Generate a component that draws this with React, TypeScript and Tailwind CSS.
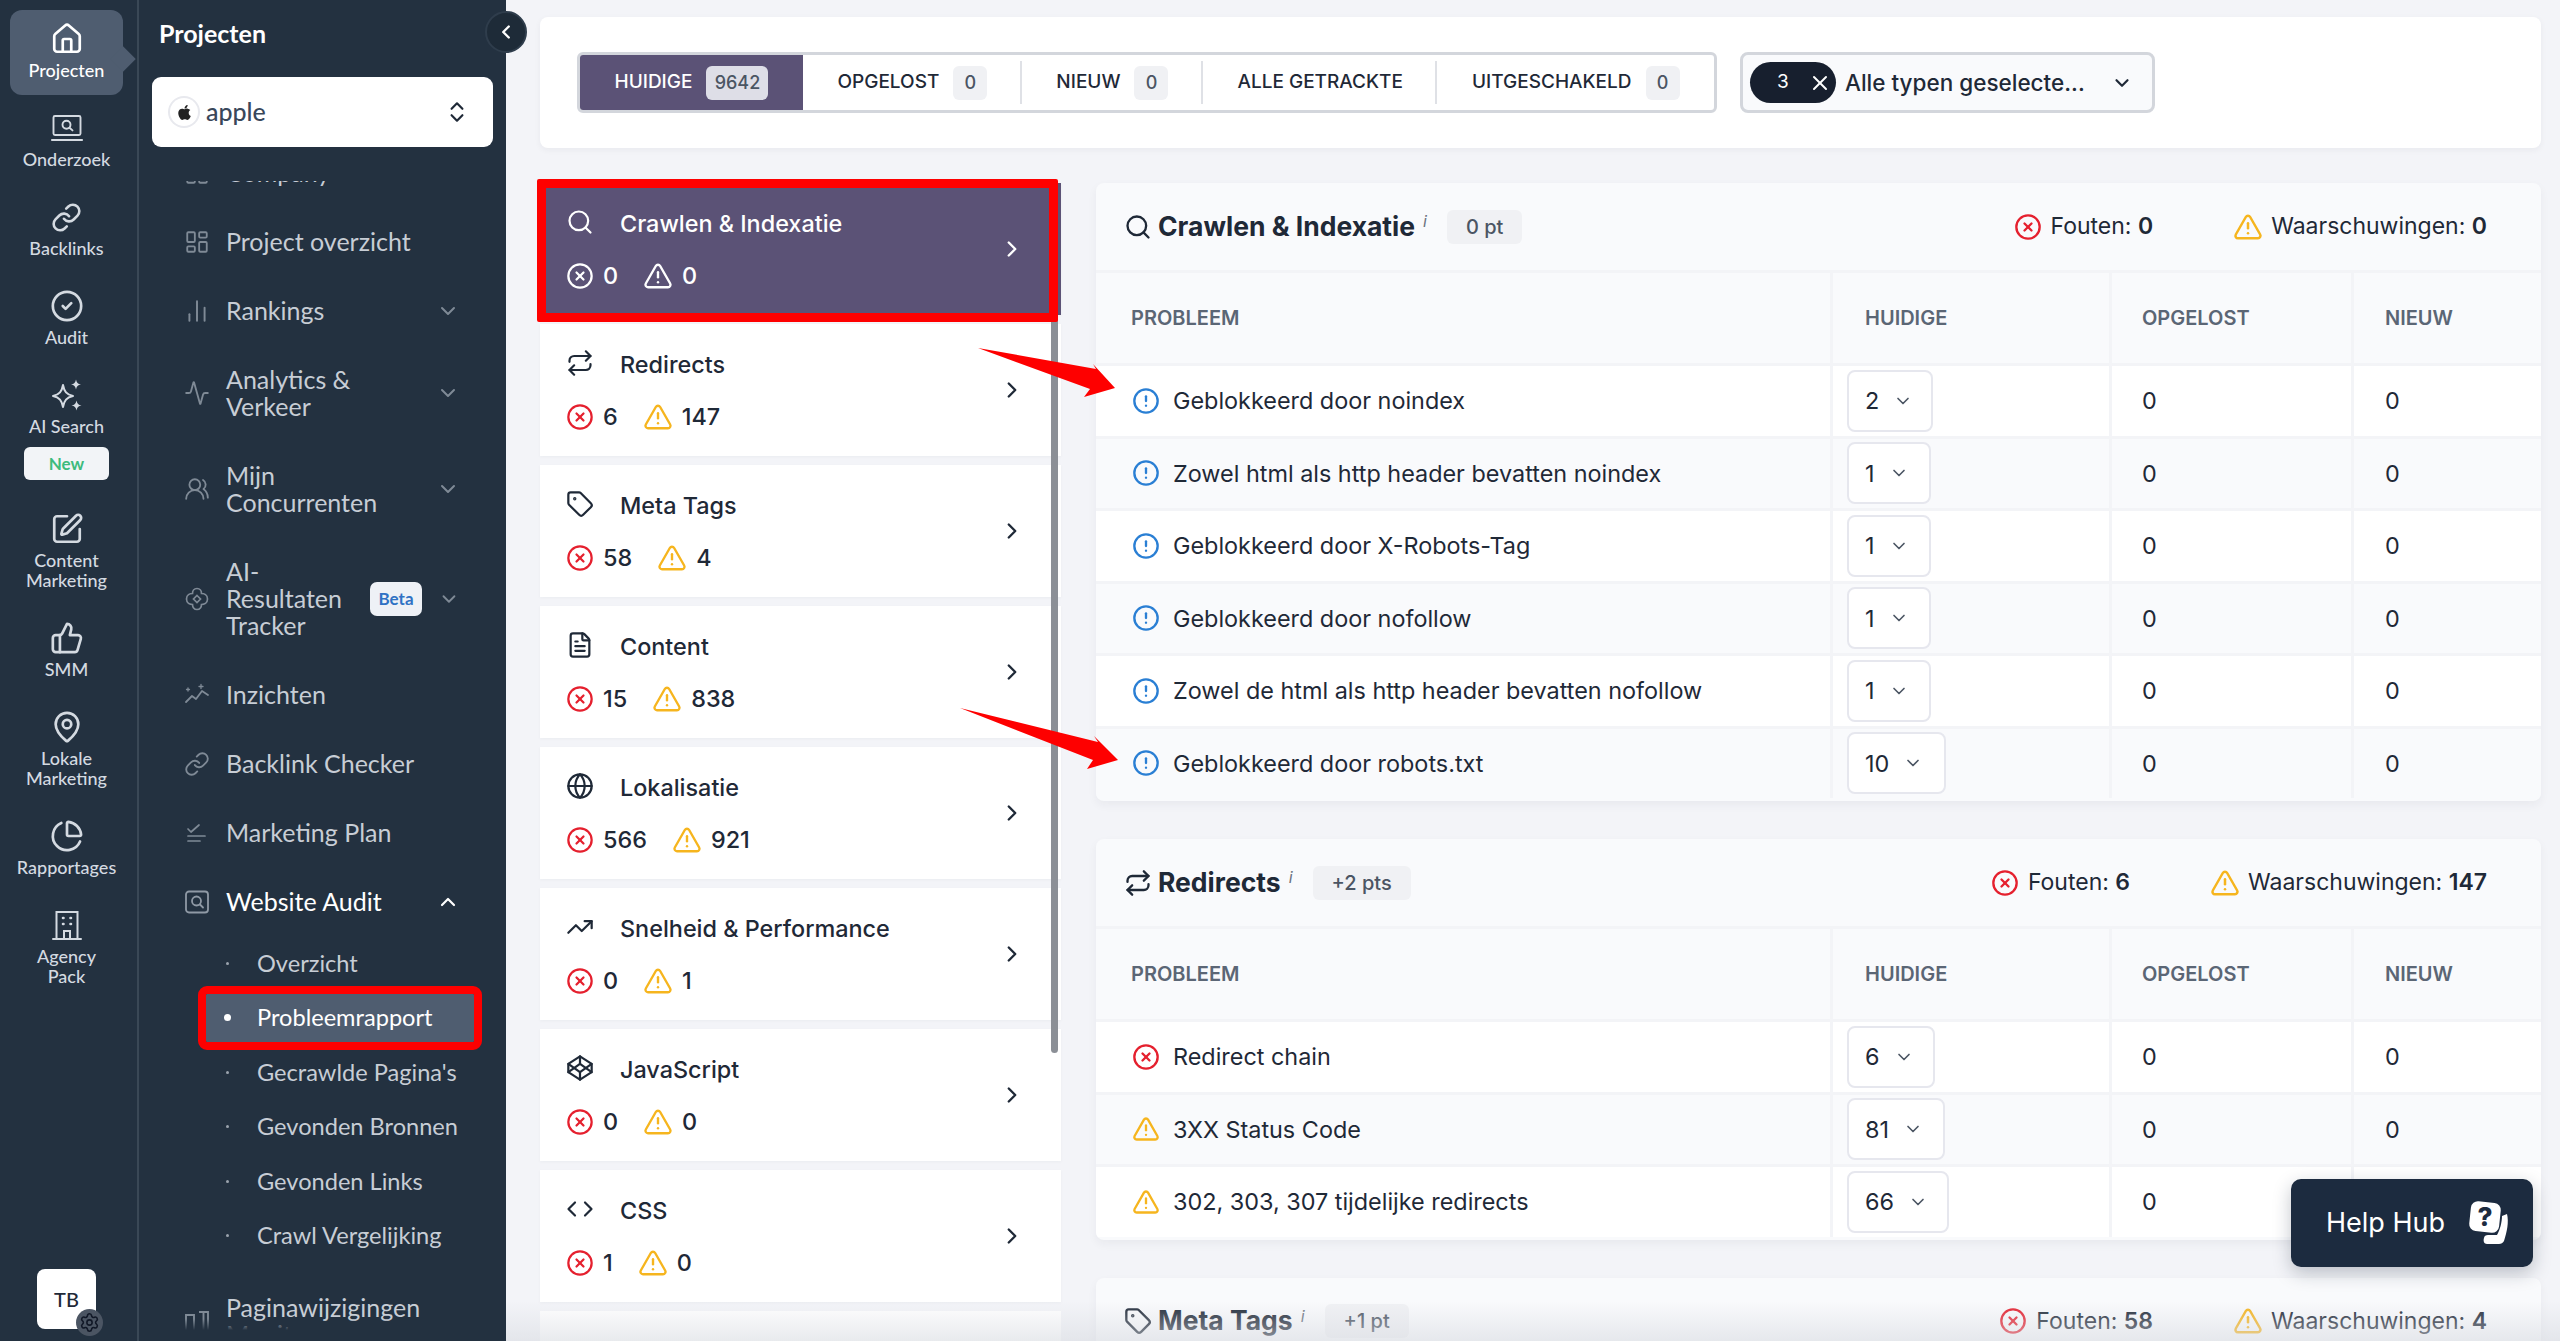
import {
  Activity, BarChart2, ChevronDown, ChevronLeft, ChevronRight, ChevronUp, ChevronsUpDown,
  CircleAlert, CircleCheck, CircleX, Codepen, FileText, Globe, Home, LayoutDashboard, Link,
  MapPin, PieChart, Repeat, Search, Settings, SquarePen, Tag, ThumbsUp, TrendingUp, TriangleAlert, UsersRound, X,
} from "lucide-react";
import { FaApple } from "react-icons/fa";
import type { ReactNode } from "react";

function LaptopSearch() {
  return (
    <svg viewBox="0 0 34 34" className="w-[34px] h-[34px]" fill="none" stroke="currentColor" strokeWidth="1.9" strokeLinecap="round">
      <rect x="3.5" y="5" width="27" height="19" rx="1.5" />
      <path d="M2 29h30" strokeWidth="2.2" />
      <circle cx="16.5" cy="13.8" r="4" />
      <path d="M19.5 16.8l3 2.6" />
    </svg>
  );
}

function SparkleIcon() {
  return (
    <svg viewBox="0 0 34 34" className="w-[34px] h-[34px]" fill="none" stroke="currentColor" strokeWidth="2" strokeLinejoin="round">
      <path d="M13 7c1.2 6.5 3.5 9.5 10 11-6.5 1.5-8.8 4.5-10 11-1.2-6.5-3.5-9.5-10-11 6.5-1.5 8.8-4.5 10-11z" />
      <path d="M26 1.5c.6 3 1.8 4.4 5 5-3.2.6-4.4 2-5 5-.6-3-1.8-4.4-5-5 3.2-.6 4.4-2 5-5z" fill="currentColor" stroke="none" />
      <path d="M26.5 22.5c.6 3 1.8 4.4 5 5-3.2.6-4.4 2-5 5-.6-3-1.8-4.4-5-5 3.2-.6 4.4-2 5-5z" fill="currentColor" stroke="none" />
    </svg>
  );
}

function BuildingIcon() {
  return (
    <svg viewBox="0 0 34 34" className="w-[34px] h-[34px]" fill="none" stroke="currentColor" strokeWidth="2" strokeLinecap="round">
      <path d="M6.5 31V4h21v27" />
      <path d="M3 31h28" />
      <path d="M13 10h.5M20.5 10h.5M13 16h.5M20.5 16h.5" strokeWidth="2.6" />
      <path d="M14 31v-8h6v8" />
    </svg>
  );
}

function FlowerIcon() {
  return (
    <svg viewBox="0 0 26 26" className="w-[26px] h-[26px]" fill="none" stroke="currentColor" strokeWidth="1.7">
      <path d="M13 2.5c3 0 4.5 2.5 4.5 5 2.5 0 6 1.5 6 5.5s-3.5 5.5-6 5.5c0 2.5-1.5 5-4.5 5s-4.5-2.5-4.5-5c-2.5 0-6-1.5-6-5.5s3.5-5.5 6-5.5c0-2.5 1.5-5 4.5-5z" />
      <path d="M13 9.5l3.5 3.5-3.5 3.5-3.5-3.5z" />
    </svg>
  );
}

function InsightIcon() {
  return (
    <svg viewBox="0 0 26 26" className="w-[26px] h-[26px]" fill="none" stroke="currentColor" strokeWidth="1.8" strokeLinecap="round" strokeLinejoin="round">
      <path d="M2 20l6-6 4 3 6-8 6 4" />
      <path d="M17 2.5v4M15 4.5h4M4 6v3M2.5 7.5h3" strokeWidth="1.3" />
    </svg>
  );
}

function PlanIcon() {
  return (
    <svg viewBox="0 0 26 26" className="w-[26px] h-[26px]" fill="none" stroke="currentColor" strokeWidth="1.7" strokeLinecap="round" strokeLinejoin="round">
      <path d="M4 9l3 3 8-7" />
      <path d="M4 16h17M4 21h12" />
    </svg>
  );
}

function AuditBoxIcon() {
  return (
    <svg viewBox="0 0 26 26" className="w-[26px] h-[26px]" fill="none" stroke="currentColor" strokeWidth="1.8" strokeLinecap="round">
      <rect x="2" y="2.5" width="22" height="21" rx="3" />
      <circle cx="12.5" cy="12" r="4.5" />
      <path d="M16 15.5l3 3" />
    </svg>
  );
}

function PageChangeIcon() {
  return (
    <svg viewBox="0 0 26 26" className="w-[26px] h-[26px]" fill="none" stroke="currentColor" strokeWidth="1.9">
      <path d="M2 25V7h8v18M15 4h9v21M19.5 4v21" />
    </svg>
  );
}

function AngleCodeIcon() {
  return (
    <svg viewBox="0 0 28 28" className="w-[28px] h-[28px]" fill="none" stroke="currentColor" strokeWidth="2.2" strokeLinecap="round" strokeLinejoin="round">
      <path d="M9 7.5L2.5 14 9 20.5M19 7.5l6.5 6.5-6.5 6.5" />
    </svg>
  );
}

function HelpIcon() {
  return (
    <svg viewBox="0 0 46 46" className="w-[46px] h-[46px]" fill="none">
      <rect x="4" y="2" width="30" height="30" rx="7" fill="#fff" transform="rotate(6 19 17)" />
      <text x="19" y="26" textAnchor="middle" fontFamily="Inter, sans-serif" fontWeight="800" fontSize="26" fill="#1c2b3f">?</text>
      <path d="M41 14c2 8 0 18-3 27-1 2-3 3-5 3H21c-3 0-4-3-3-6 0-2 2-3 4-3h9c3-5 5-13 5-19z" fill="#fff" />
    </svg>
  );
}

const railItems: { icon: ReactNode; label: string[]; active?: boolean; badge?: boolean }[] = [
  { icon: <Home size={34} strokeWidth={1.9} />, label: ["Projecten"], active: true },
  { icon: <LaptopSearch />, label: ["Onderzoek"] },
  { icon: <Link size={31} strokeWidth={2} />, label: ["Backlinks"] },
  { icon: <CircleCheck size={34} strokeWidth={1.9} />, label: ["Audit"] },
  { icon: <SparkleIcon />, label: ["AI Search"], badge: true },
  { icon: <SquarePen size={34} strokeWidth={1.9} />, label: ["Content", "Marketing"] },
  { icon: <ThumbsUp size={34} strokeWidth={1.9} />, label: ["SMM"] },
  { icon: <MapPin size={34} strokeWidth={1.9} />, label: ["Lokale", "Marketing"] },
  { icon: <PieChart size={34} strokeWidth={1.9} />, label: ["Rapportages"] },
  { icon: <BuildingIcon />, label: ["Agency", "Pack"] },
];

const navTop: { icon: ReactNode; label: string[]; chevron?: boolean; beta?: boolean }[] = [
  { icon: <LayoutDashboard size={26} strokeWidth={1.7} />, label: ["Project overzicht"] },
  { icon: <BarChart2 size={26} strokeWidth={1.8} />, label: ["Rankings"], chevron: true },
  { icon: <Activity size={26} strokeWidth={1.7} />, label: ["Analytics &", "Verkeer"], chevron: true },
  { icon: <UsersRound size={26} strokeWidth={1.7} />, label: ["Mijn", "Concurrenten"], chevron: true },
  { icon: <FlowerIcon />, label: ["AI-", "Resultaten", "Tracker"], chevron: true, beta: true },
  { icon: <InsightIcon />, label: ["Inzichten"] },
  { icon: <Link size={26} strokeWidth={1.7} />, label: ["Backlink Checker"] },
  { icon: <PlanIcon />, label: ["Marketing Plan"] },
];

const subItems = ["Overzicht", "Probleemrapport", "Gecrawlde Pagina's", "Gevonden Bronnen", "Gevonden Links", "Crawl Vergelijking"];

const tabs = [
  { label: "HUIDIGE", count: "9642", active: true },
  { label: "OPGELOST", count: "0" },
  { label: "NIEUW", count: "0" },
  { label: "ALLE GETRACKTE" },
  { label: "UITGESCHAKELD", count: "0" },
];

const categories: { icon: ReactNode; title: string; errors: number; warnings: number; active?: boolean }[] = [
  { icon: <Search size={28} strokeWidth={1.9} />, title: "Crawlen & Indexatie", errors: 0, warnings: 0, active: true },
  { icon: <Repeat size={28} strokeWidth={1.9} />, title: "Redirects", errors: 6, warnings: 147 },
  { icon: <Tag size={28} strokeWidth={1.9} />, title: "Meta Tags", errors: 58, warnings: 4 },
  { icon: <FileText size={28} strokeWidth={1.9} />, title: "Content", errors: 15, warnings: 838 },
  { icon: <Globe size={28} strokeWidth={1.9} />, title: "Lokalisatie", errors: 566, warnings: 921 },
  { icon: <TrendingUp size={28} strokeWidth={1.9} />, title: "Snelheid & Performance", errors: 0, warnings: 1 },
  { icon: <Codepen size={28} strokeWidth={1.9} />, title: "JavaScript", errors: 0, warnings: 0 },
  { icon: <AngleCodeIcon />, title: "CSS", errors: 1, warnings: 0 },
];

type Kind = "info" | "error" | "warning";
type Issue = { kind: Kind; text: string; count: number; w: string };

const panels: { icon: ReactNode; title: string; pts: string; errors: number; warnings: number; rows: Issue[] }[] = [
  {
    icon: <Search size={28} strokeWidth={2} />,
    title: "Crawlen & Indexatie",
    pts: "0 pt",
    errors: 0,
    warnings: 0,
    rows: [
      { kind: "info", text: "Geblokkeerd door noindex", count: 2, w: "w-[86px]" },
      { kind: "info", text: "Zowel html als http header bevatten noindex", count: 1, w: "w-[84px]" },
      { kind: "info", text: "Geblokkeerd door X-Robots-Tag", count: 1, w: "w-[84px]" },
      { kind: "info", text: "Geblokkeerd door nofollow", count: 1, w: "w-[84px]" },
      { kind: "info", text: "Zowel de html als http header bevatten nofollow", count: 1, w: "w-[84px]" },
      { kind: "info", text: "Geblokkeerd door robots.txt", count: 10, w: "w-[99px]" },
    ],
  },
  {
    icon: <Repeat size={28} strokeWidth={2} />,
    title: "Redirects",
    pts: "+2 pts",
    errors: 6,
    warnings: 147,
    rows: [
      { kind: "error", text: "Redirect chain", count: 6, w: "w-[88px]" },
      { kind: "warning", text: "3XX Status Code", count: 81, w: "w-[98px]" },
      { kind: "warning", text: "302, 303, 307 tijdelijke redirects", count: 66, w: "w-[102px]" },
    ],
  },
  { icon: <Tag size={28} strokeWidth={2} />, title: "Meta Tags", pts: "+1 pt", errors: 58, warnings: 4, rows: [] },
];

function KindIcon({ kind }: { kind: Kind }) {
  if (kind === "error") return <CircleX size={28} strokeWidth={2} className="text-[#e5202e]" />;
  if (kind === "warning") return <TriangleAlert size={28} strokeWidth={2} className="text-[#f6b51e]" />;
  return <CircleAlert size={28} strokeWidth={2} className="text-[#2a7fd4]" />;
}

function Rail() {
  return (
    <aside className="w-[139px] shrink-0 h-full border-r-[2px] border-[#3a4856] bg-[#233140] flex flex-col items-start pl-[10px] pt-[10px] font-['Lato',sans-serif]">
      {railItems.map((item) => (
        <div
          key={item.label[0]}
          className={`relative w-[113px] rounded-[12px] pt-3 pb-[15px] mb-1 flex flex-col items-center gap-1 ${item.active ? "bg-[#4f5d70] text-white" : "text-[#d4dae1]"}`}
        >
          <div className="h-[34px] flex items-center justify-center">{item.icon}</div>
          <div className="text-[18px] leading-[20px] font-medium text-center whitespace-nowrap">
            {item.label.map((l) => (
              <div key={l}>{l}</div>
            ))}
          </div>
          {item.badge && (
            <div className="mt-[7px] mb-px w-[85px] h-[33px] rounded-[6px] bg-[#f2f4f7] flex items-center justify-center text-[17px] font-bold text-[#3dbb7d]">
              New
            </div>
          )}
          {item.active && <div className="absolute right-[-9px] top-[40px] w-[18px] h-[18px] rotate-45 bg-[#4f5d70]" />}
        </div>
      ))}
      <div className="relative mt-auto mb-[12px] ml-[27px] w-[59px] h-[60px] rounded-[8px] bg-white flex items-center justify-center text-[20px] font-medium text-[#1f2937]">
        TB
        <div className="absolute right-[-7px] bottom-[-7px] w-[27px] h-[27px] rounded-full bg-[#4b5563] flex items-center justify-center">
          <Settings size={21} className="text-[#111827]" strokeWidth={1.8} />
        </div>
      </div>
    </aside>
  );
}

function Sidebar() {
  return (
    <aside className="relative w-[367px] shrink-0 h-full bg-[#233140] flex flex-col font-['Lato',sans-serif]">
      <div className="pl-5 pt-[18px] leading-[30px] text-[25px] font-bold text-white">Projecten</div>
      <div className="mx-[13px] mt-[29px] h-[70px] rounded-[9px] bg-white flex items-center pl-[18px] pr-[23px] shrink-0">
        <div className="w-[28px] h-[28px] rounded-full bg-white ring-[2px] ring-[#e8e9ee] flex items-center justify-center">
          <FaApple className="text-[#222] text-[17px]" />
        </div>
        <span className="ml-[8px] text-[25px] text-[#39475a] font-medium">apple</span>
        <ChevronsUpDown size={26} className="ml-auto text-[#1f2937]" strokeWidth={2} />
      </div>
      <div className="mt-[34px] flex-1 min-h-0 overflow-hidden text-[#c7cdd5] text-[25px]">
        <div className="-mt-[43px] pl-[45px] pr-[46px]">
          <div className="flex items-center gap-[16px] h-[69px]">
            <div className="w-[26px] flex justify-center text-[#7f8a96]">
              <LayoutDashboard size={26} strokeWidth={1.7} />
            </div>
            <span>Company</span>
          </div>
          {navTop.map((item) => (
            <div key={item.label[0]} className="flex items-center gap-[16px] py-[21px]">
              <div className="w-[26px] shrink-0 flex justify-center text-[#7f8a96]">{item.icon}</div>
              <div className="leading-[27px] whitespace-nowrap">
                {item.label.map((l) => (
                  <div key={l}>{l}</div>
                ))}
              </div>
              {item.beta && (
                <div className="ml-[12px] w-[57px] h-[34px] rounded-[7px] bg-[#eef1f6] flex items-center justify-center text-[17px] font-bold text-[#2f72c4]">
                  Beta
                </div>
              )}
              {item.chevron && <ChevronDown size={24} strokeWidth={2} className="ml-auto text-[#7f8a96]" />}
            </div>
          ))}
          <div className="flex items-center gap-[16px] py-[21px] text-white">
            <div className="w-[26px] shrink-0 flex justify-center text-[#8f99a5]">
              <AuditBoxIcon />
            </div>
            <span className="leading-[27px]">Website Audit</span>
            <ChevronUp size={24} strokeWidth={2.2} className="ml-auto text-white" />
          </div>
        </div>
        <div className="ml-[67px] w-[268px] text-[23.6px]">
          {subItems.map((s) => {
            const active = s === "Probleemrapport";
            return (
              <div key={s} className="h-[54.5px] flex items-center">
                <div className={`w-full h-[48px] flex items-center pl-[18px] ${active ? "bg-[#4f5d70] text-white outline-[8px] outline-[#fe0000] rounded-[1px]" : ""}`}>
                  <span className={active ? "w-[7px] h-[7px] rounded-full bg-white" : "ml-[2px] w-[3px] h-[3px] rounded-full bg-[#9aa3ad]"} />
                  <span className={active ? "ml-[26px]" : "ml-[28px]"}>{s}</span>
                </div>
              </div>
            );
          })}
        </div>
        <div className="mt-[31px] pl-[45px] flex items-center gap-[16px] text-[#c7cdd5]">
          <div className="w-[26px] shrink-0 flex justify-center text-[#7f8a96]">
            <PageChangeIcon />
          </div>
          <div className="leading-[27px]">
            <div>Paginawijzigingen</div>
            <div>Monitor</div>
          </div>
        </div>
      </div>
      <div className="absolute left-0 right-0 bottom-0 h-[22px] bg-gradient-to-b from-[#233140]/0 via-[#233140] to-[#233140]" />
      <button className="absolute top-[11px] right-[-21px] z-10 w-[42px] h-[42px] rounded-full bg-[#1e2b38] border-[2px] border-[#2f3d4c] flex items-center justify-center text-white">
        <ChevronLeft size={22} strokeWidth={2.6} />
      </button>
    </aside>
  );
}

function TopBar() {
  return (
    <div className="h-[131px] shrink-0 rounded-[8px] bg-white shadow-[0_2px_6px_rgba(30,40,60,0.05)] flex items-center pl-[37px] gap-[23px]">
      <div className="h-[61px] flex items-stretch rounded-[6px] border-[3px] border-[#d3d6dc] overflow-hidden bg-white text-[19px] font-medium">
        {tabs.map((t, i) => (
          <div key={t.label} className={`relative flex items-center gap-[14px] px-[34.5px] ${t.active ? "bg-[#5b5276] text-white" : "text-[#1f2937]"}`}>
            <span className="whitespace-nowrap">{t.label}</span>
            {t.count && (
              <span className={`h-[34px] rounded-[6px] flex items-center justify-center text-[18px] ${t.active ? "bg-[#dedee7] text-[#4b5563] w-[62px]" : "bg-[#f0f1f4] text-[#4b5563] w-[34px]"}`}>
                {t.count}
              </span>
            )}
            {!t.active && i < tabs.length - 1 && <span className="absolute right-0 top-[6px] bottom-[6px] w-[2px] bg-[#dfe1e6]" />}
          </div>
        ))}
      </div>
      <div className="h-[61px] w-[415px] rounded-[8px] border-[3px] border-[#d3d6dc] bg-[#f9fafc] flex items-center pl-[7px]">
        <div className="w-[86px] h-[41px] rounded-full bg-[#171f2e] text-white flex items-center pl-[27px] text-[19px]">
          3
          <X size={24} strokeWidth={2} className="ml-[19px]" />
        </div>
        <span className="ml-[9px] text-[22.5px] text-[#1f2937] font-medium whitespace-nowrap">Alle typen geselecte...</span>
        <ChevronDown size={22} strokeWidth={2.4} className="ml-auto mr-[19px] text-[#1f2937]" />
      </div>
    </div>
  );
}

function CategoryList() {
  return (
    <div className="relative w-[521px] shrink-0 flex flex-col gap-[9px]">
      {categories.map((c) => (
        <div
          key={c.title}
          className={`relative h-[132px] shrink-0 shadow-[0_1px_3px_rgba(30,40,60,0.04)] flex ${c.active ? "bg-[#5b5276] text-white" : "bg-white text-[#1f2937]"}`}
        >
          <div className="w-[80px] pl-[26px] shrink-0 flex flex-col">
            <div className="mt-[25px] h-[28px] flex">{c.icon}</div>
          </div>
          <div className="absolute left-[26px] bottom-[24px] flex items-center text-[23.4px] leading-[28px]">
            <CircleX size={28} strokeWidth={1.9} className={c.active ? "" : "text-[#e5202e]"} />
            <span className="ml-[9px] font-medium">{c.errors}</span>
            <TriangleAlert size={30} strokeWidth={1.9} className={`ml-[25px] ${c.active ? "" : "text-[#f6b51e]"}`} />
            <span className="ml-[9px] font-medium">{c.warnings}</span>
          </div>
          <div className="mt-[26px] text-[23.4px] leading-[30px] font-medium">{c.title}</div>
          <ChevronRight size={26} strokeWidth={2.2} className="absolute right-[36px] top-[53px]" />
        </div>
      ))}
      <div className="h-[60px] shrink-0 bg-white" />
      <div className="absolute left-[511px] top-0 h-[870px] w-[7px] rounded-full bg-[#8b8f96]" />
      <div className="absolute left-[-3px] top-[-4px] w-[521px] h-[143px] border-[9px] border-[#fe0000] rounded-[2px]" />
    </div>
  );
}

function Panel({ panel }: { panel: (typeof panels)[number] }) {
  return (
    <section className="rounded-[8px] bg-[#f9fafc] shadow-[0_4px_10px_rgba(30,40,60,0.05)] overflow-hidden shrink-0 pb-[3px]">
      <header className="h-[90px] border-b-[3px] border-[#f3f4f7] flex items-center pl-[28px] pr-[54px] text-[#1f2937]">
        {panel.icon}
        <h3 className="ml-[6px] text-[26.5px] font-bold text-[#1f2937] whitespace-nowrap">{panel.title}</h3>
        <span className="self-start mt-[26px] ml-[8px] text-[16px] italic text-[#6b7280]">i</span>
        <span className="ml-[20px] h-[34px] px-[19px] rounded-[6px] bg-[#f0f1f4] flex items-center text-[20px] font-medium text-[#4b5563] whitespace-nowrap">{panel.pts}</span>
        <div className="ml-auto flex items-center text-[23px]">
          <CircleX size={28} strokeWidth={2} className="text-[#e5202e]" />
          <span className="ml-[9px]">Fouten: <b className="font-semibold">{panel.errors}</b></span>
          <TriangleAlert size={30} strokeWidth={2} className="ml-[80px] text-[#f6b51e]" />
          <span className="ml-[8px]">Waarschuwingen: <b className="font-semibold">{panel.warnings}</b></span>
        </div>
      </header>
      {panel.rows.length > 0 && (
        <>
          <div className="grid grid-cols-[734px_279px_242px_1fr] h-[90px] text-[20px] font-semibold text-[#5b6675]">
            <div className="pl-[35px] flex items-center">PROBLEEM</div>
            <div className="pl-[32px] flex items-center border-l-[3px] border-[#f3f4f7]">HUIDIGE</div>
            <div className="pl-[30px] flex items-center border-l-[3px] border-[#f3f4f7]">OPGELOST</div>
            <div className="pl-[31px] flex items-center border-l-[3px] border-[#f3f4f7]">NIEUW</div>
          </div>
          {panel.rows.map((r, i) => (
            <div key={r.text} className={`grid grid-cols-[734px_279px_242px_1fr] h-[72.5px] border-t-[3px] border-[#f3f4f7] text-[23.4px] text-[#1f2937] ${i % 2 === 0 ? "bg-white" : "bg-[#f9fafc]"}`}>
              <div className="pl-[36px] flex items-center gap-[13px]">
                <KindIcon kind={r.kind} />
                <span className="whitespace-nowrap">{r.text}</span>
              </div>
              <div className="pl-[14px] flex items-center border-l-[3px] border-[#f3f4f7]">
                <div className={`${r.w} h-[62px] rounded-[8px] border-[2px] border-[#e6e7ee] bg-white flex items-center pl-[16px] gap-[14px]`}>
                  {r.count}
                  <ChevronDown size={20} strokeWidth={2} className="text-[#4b5563]" />
                </div>
              </div>
              <div className="pl-[30px] flex items-center border-l-[3px] border-[#f3f4f7]">0</div>
              <div className="pl-[31px] flex items-center border-l-[3px] border-[#f3f4f7]">0</div>
            </div>
          ))}
        </>
      )}
    </section>
  );
}

function Arrows() {
  return (
    <svg viewBox="0 0 2560 1341" className="absolute inset-0 w-full h-full pointer-events-none z-20">
      <polygon points="978,348 1096,369 1093,364 1115,388 1084,397 1090,389" fill="#fe0000" />
      <polygon points="960,708 1098,742 1094,736 1118,760 1087,769 1093,760" fill="#fe0000" />
    </svg>
  );
}

export default function App() {
  return (
    <div className="relative w-full h-[1341px] overflow-hidden flex bg-[#f3f4f8] text-[#1f2937] font-['Inter',sans-serif]">
      <Rail />
      <Sidebar />
      <main className="flex-1 min-w-0 h-full overflow-hidden pl-[34px] pr-[19px] pt-[17px] flex flex-col gap-[35px]">
        <TopBar />
        <div className="flex gap-[35px] items-start">
          <CategoryList />
          <div className="flex-1 min-w-0 flex flex-col gap-[38px]">
            {panels.map((p) => (
              <Panel key={p.title} panel={p} />
            ))}
          </div>
        </div>
      </main>
      <div className="absolute left-[506px] right-0 bottom-0 h-[40px] bg-gradient-to-b from-[#d9dce2]/0 to-[#d9dce2]/60 pointer-events-none" />
      <Arrows />
      <div className="absolute left-[2291px] top-[1179px] w-[242px] h-[88px] rounded-[10px] bg-[#1c2b3f] shadow-[0_6px_18px_rgba(20,30,50,0.25)] flex items-center pl-[35px] z-30 text-white">
        <span className="text-[27px]">Help Hub</span>
        <span className="ml-[21px]">
          <HelpIcon />
        </span>
      </div>
    </div>
  );
}
